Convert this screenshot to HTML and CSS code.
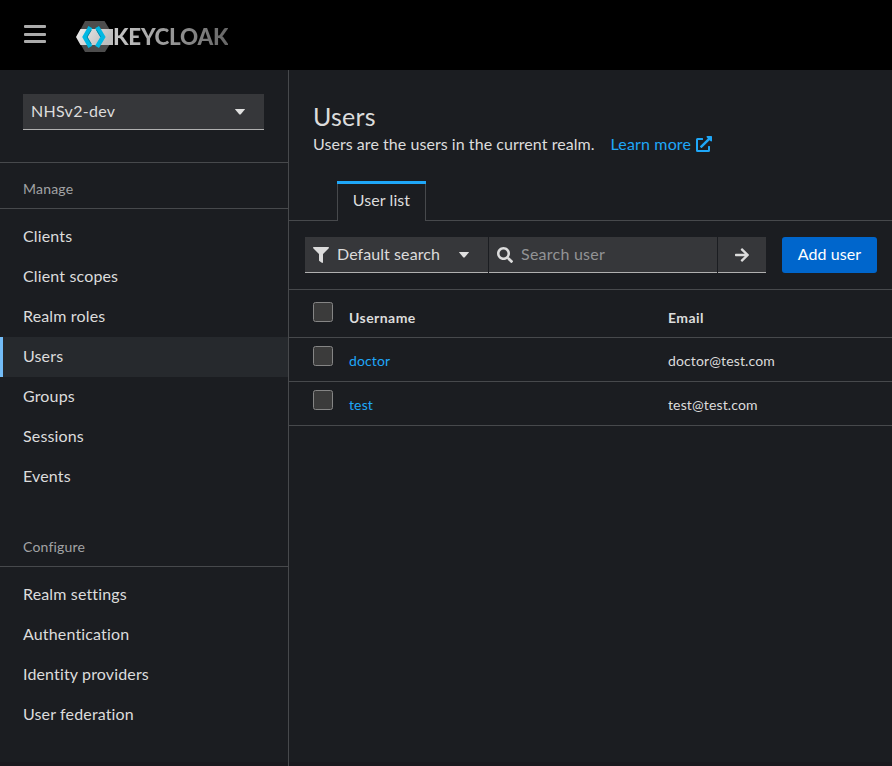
FILE: index.html
```
<!DOCTYPE html>
<html lang="en">
<head>
<meta charset="utf-8">
<title>Users</title>
<link rel="stylesheet" href="styles.css">
</head>
<body>
<header class="masthead">
  <button class="menu-toggle" aria-label="Global navigation"><span></span><span></span><span></span></button>
  <div class="brand">
    <svg class="brand-mark" width="38" height="32" viewBox="0 0 38 32">
      <defs><linearGradient id="band" x2="1" y2="0.3"><stop offset="0" stop-color="#ededed"/><stop offset="1" stop-color="#bdbdbd"/></linearGradient></defs>
      <path d="M9 0h19.500l8 13v6l-7.500 12H9L0.500 16z" fill="#4d4d4d"/>
      <path d="M4.500 8H37v16H4.500L0 16z" fill="url(#band)"/>
      <path d="M13.300 8L8.800 16l4.500 8" fill="none" stroke="#00b8e3" stroke-width="4.500" stroke-linecap="square"/>
      <path d="M22.200 8L27 16l-4.800 8" fill="none" stroke="#00b8e3" stroke-width="4.500" stroke-linecap="square"/>
      <path d="M15.300 9l-4.200 7 4.200 7M20.500 9l4.200 7" fill="none" stroke="#008aaa" stroke-width="1"/>
    </svg>
    <span class="brand-name">KEYCLOAK</span>
  </div>
</header>
<div class="page">
  <nav class="sidebar">
    <div class="realm-box">
      <button class="realm"><span>NHSv2-dev</span><i class="caret"></i></button>
    </div>
    <section>
      <h2>Manage</h2>
      <ul>
        <li><a>Clients</a></li>
        <li><a>Client scopes</a></li>
        <li><a>Realm roles</a></li>
        <li class="current"><a>Users</a></li>
        <li><a>Groups</a></li>
        <li><a>Sessions</a></li>
        <li><a>Events</a></li>
      </ul>
    </section>
    <section>
      <h2>Configure</h2>
      <ul>
        <li><a>Realm settings</a></li>
        <li><a>Authentication</a></li>
        <li><a>Identity providers</a></li>
        <li><a>User federation</a></li>
      </ul>
    </section>
  </nav>
  <main class="content">
    <div class="intro">
      <h1>Users</h1>
      <p><span>Users are the users in the current realm.</span><a class="learn">Learn more
        <svg width="16" height="16" viewBox="0 0 512 512" fill="currentColor"><path d="M432 320h-32a16 16 0 0 0-16 16v112H64V128h144a16 16 0 0 0 16-16V80a16 16 0 0 0-16-16H48a48 48 0 0 0-48 48v352a48 48 0 0 0 48 48h352a48 48 0 0 0 48-48V336a16 16 0 0 0-16-16zM488 0H360c-21.400 0-32 25.900-17 41l35.700 35.700L135 320.400a24 24 0 0 0 0 34L157.700 377a24 24 0 0 0 34 0L435.300 133.300 471 169c15 15 41 4.500 41-17V24a24 24 0 0 0-24-24z"/></svg></a></p>
    </div>
    <div class="tabs"><button class="tab">User list</button></div>
    <div class="toolbar">
      <button class="filter">
        <svg width="16" height="16" viewBox="0 0 512 512" fill="currentColor"><path d="M488 0H24C2.700 0-8 25.900 7 41l185 185v206c0 7.800 3.800 15.200 10.200 19.700l80 56C298 518.700 320 507.500 320 488V226L505 41c15-15 4.300-41-17-41z"/></svg>
        <span>Default search</span><i class="caret"></i>
      </button>
      <div class="search">
        <svg width="16" height="16" viewBox="0 0 512 512" fill="currentColor"><path d="M505 442.700L405.300 343c-4.500-4.500-10.600-7-17-7H372c27.600-35.300 44-79.700 44-128C416 93.100 322.900 0 208 0S0 93.100 0 208s93.100 208 208 208c48.300 0 92.700-16.400 128-44v16.300c0 6.400 2.500 12.500 7 17l99.700 99.700c9.400 9.400 24.600 9.400 33.900 0l28.300-28.300c9.400-9.400 9.400-24.600.1-34zM208 336c-70.700 0-128-57.200-128-128 0-70.700 57.200-128 128-128 70.700 0 128 57.200 128 128 0 70.700-57.200 128-128 128z"/></svg>
        <span>Search user</span>
      </div>
      <button class="go" aria-label="Search"><svg width="14" height="16" viewBox="0 0 448 512" fill="currentColor"><path d="M190.500 66.900l22.200-22.200c9.400-9.400 24.600-9.400 33.900 0L441 239c9.400 9.400 9.400 24.600 0 33.900L246.600 467.300c-9.400 9.400-24.600 9.400-33.900 0l-22.200-22.200c-9.500-9.500-9.300-25 .4-34.300L311.400 296H24c-13.300 0-24-10.700-24-24v-32c0-13.300 10.700-24 24-24h287.400L190.900 101.200c-9.800-9.300-10-24.800-.4-34.300z"/></svg></button>
      <button class="add"><span>Add user</span></button>
    </div>
    <div class="table">
      <div class="row head"><i class="check"></i><span>Username</span><span>Email</span></div>
      <div class="row"><i class="check"></i><a>doctor</a><span>doctor@test.com</span></div>
      <div class="row"><i class="check"></i><a>test</a><span>test@test.com</span></div>
    </div>
  </main>
</div>
</body>
</html>
```
FILE: styles.css
```
* { box-sizing: border-box; }
body {
  margin: 0;
  height: 766px;
  display: flex;
  flex-direction: column;
  overflow: hidden;
  background: #1b1d21;
  color: #dcdcdc;
  font: 16px/24px Lato, sans-serif;
  letter-spacing: 0.08px;
}
h1, h2, p, ul { margin: 0; padding: 0; font-weight: 400; }
ul { list-style: none; }
button { font: inherit; letter-spacing: inherit; color: inherit; border: 0; margin: 0; padding: 0; background: none; border-radius: 0; }
svg { display: block; flex: none; }

.masthead { flex: none; height: 70px; background: #000; display: flex; padding: 21px 24px 0; }
.menu-toggle { width: 22px; height: 22px; padding-top: 4px; display: flex; flex-direction: column; gap: 4.5px; }
.menu-toggle span { width: 22px; height: 3px; border-radius: 1px; background: #acacac; }
.brand { display: flex; margin-left: 30px; }
.brand-name {
  margin-left: -1px;
  font-size: 22.400px;
  line-height: 32px;
  font-weight: 900;
  letter-spacing: -0.2px;
  background: linear-gradient(90deg, #c8c8c8, #666);
  background-clip: text;
  -webkit-background-clip: text;
  color: transparent;
}

.page { flex: 1; display: flex; min-height: 0; border-bottom: 4px solid #1a191e; }
.sidebar { width: 289px; flex: none; border-right: 1px solid #47494c; margin-bottom: -4px; }
.realm-box { height: 93px; padding: 24px 24px 0 23px; border-bottom: 1px solid #47494c; }
.realm { width: 241px; height: 36px; display: flex; align-items: center; justify-content: space-between; padding: 0 19px 0 8px; background: #36373a; border-bottom: 1px solid #b0b0b0; }
.realm span { letter-spacing: 0.3px; padding-bottom: 2px; }
.caret { width: 10px; height: 6px; background: #e0e0e0; clip-path: polygon(5% 0, 95% 0, 100% 12%, 56% 100%, 44% 100%, 0 12%); }
.sidebar h2 { height: 46px; padding: 15px 23px 0; font-size: 14px; line-height: 21px; color: #a2a3a5; border-bottom: 1px solid #47494c; letter-spacing: 0.2px; }
.sidebar ul { padding: 8px 0 24px; }
.sidebar li { height: 40px; padding: 7px 23px; letter-spacing: 0.15px; }
.sidebar li.current { background: #26292d; border-left: 3px solid #73bcf7; padding-left: 20px; }

.content { flex: 1; min-width: 0; }
.intro { height: 111px; padding: 31px 24px 0; }
.intro h1 { font-size: 25px; line-height: 31px; letter-spacing: 0.2px; }
.intro p { display: flex; gap: 16px; letter-spacing: 0.05px; }
.learn { display: flex; gap: 4.5px; align-items: center; color: #1fa7f8; letter-spacing: 0.15px; }
.tabs { height: 40px; padding-left: 48px; border-bottom: 1px solid #47494c; }
.tab {
  width: 89px;
  height: 40px;
  padding-bottom: 6px;
  background: #1b1d21;
  border: 1px solid;
  border-width: 3px 1px 0;
  border-image: linear-gradient(#1fa7f8 3px, #47494c 3px) 3 1 0;
  text-align: center;
}
.toolbar { height: 69px; padding: 16px 15px 0 16px; display: flex; border-bottom: 1px solid #47494c; }
.toolbar > * { height: 36px; display: flex; align-items: center; }
.toolbar span { padding-bottom: 2px; }
.filter, .search, .go { background: #36373a; border-bottom: 1px solid #b0b0b0; }
.filter { width: 183px; padding-left: 8px; margin-right: 1px; }
.filter span { margin: 0 19px 0 8px; }
.search { width: 228px; padding-left: 8px; gap: 8px; margin-right: 1px; }
.search span { color: #929395; letter-spacing: 0.25px; }
.go { width: 48px; justify-content: center; }
.toolbar .add { width: 95px; margin-left: 16px; justify-content: center; background: #06c; color: #fff; border-radius: 3px; }

.row { height: 44px; padding: 8px 24px 0; display: grid; grid-template-columns: 36px 319px 1fr; font-size: 14px; line-height: 21px; letter-spacing: 0.13px; border-bottom: 1px solid #47494c; }
.row > :not(.check) { padding-top: 4px; }
.row a { color: #1fa7f8; }
.check { width: 20px; height: 20px; background: #3b3b3b; border: 1px solid #858585; border-radius: 2.500px; }
.head { height: 48px; padding-top: 12px; font-weight: 700; letter-spacing: 0.45px; }
.head > :not(.check) { padding-top: 5px; }
```
